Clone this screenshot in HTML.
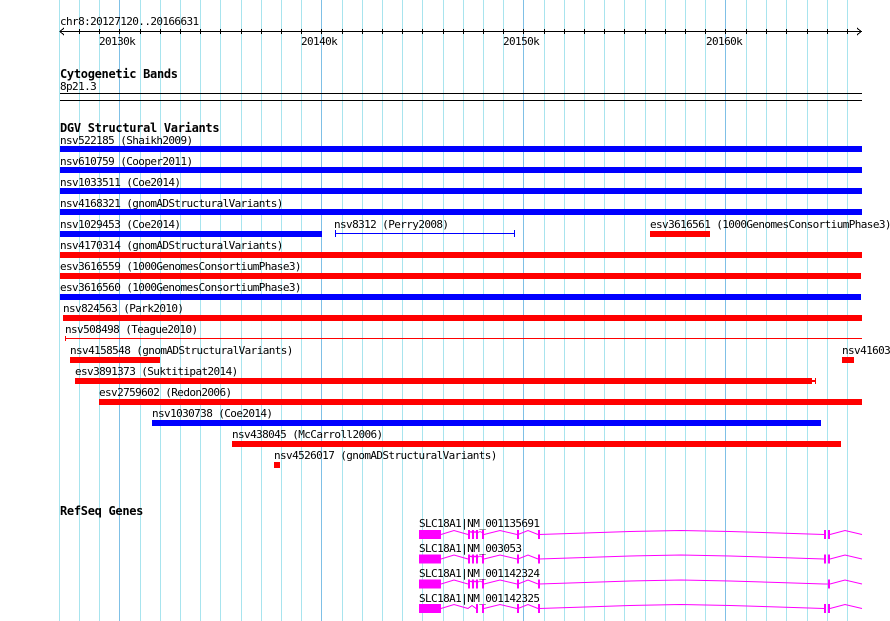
<!DOCTYPE html>
<html><head><meta charset="utf-8"><style>
html,body{margin:0;padding:0;background:#fff;}
svg{display:block;}
text{font-family:"DejaVu Sans Mono","Liberation Mono",monospace;font-size:11px;letter-spacing:-0.6px;fill:#000;}
.b{font-weight:bold;font-size:12px;letter-spacing:-0.3px;}
</style></head><body>
<svg width="890" height="621" viewBox="0 0 890 621" xmlns="http://www.w3.org/2000/svg" shape-rendering="crispEdges">
<g id="grid" stroke="#a8e4ee" stroke-width="1">
<line x1="59.5" y1="0" x2="59.5" y2="621"/><line x1="79.5" y1="0" x2="79.5" y2="621"/><line x1="99.5" y1="0" x2="99.5" y2="621"/>
<line x1="140.5" y1="0" x2="140.5" y2="621"/><line x1="160.5" y1="0" x2="160.5" y2="621"/><line x1="180.5" y1="0" x2="180.5" y2="621"/><line x1="200.5" y1="0" x2="200.5" y2="621"/><line x1="220.5" y1="0" x2="220.5" y2="621"/><line x1="241.5" y1="0" x2="241.5" y2="621"/><line x1="261.5" y1="0" x2="261.5" y2="621"/><line x1="281.5" y1="0" x2="281.5" y2="621"/><line x1="301.5" y1="0" x2="301.5" y2="621"/>
<line x1="342.5" y1="0" x2="342.5" y2="621"/><line x1="362.5" y1="0" x2="362.5" y2="621"/><line x1="382.5" y1="0" x2="382.5" y2="621"/><line x1="402.5" y1="0" x2="402.5" y2="621"/><line x1="422.5" y1="0" x2="422.5" y2="621"/><line x1="443.5" y1="0" x2="443.5" y2="621"/><line x1="463.5" y1="0" x2="463.5" y2="621"/><line x1="483.5" y1="0" x2="483.5" y2="621"/><line x1="503.5" y1="0" x2="503.5" y2="621"/>
<line x1="544.5" y1="0" x2="544.5" y2="621"/><line x1="564.5" y1="0" x2="564.5" y2="621"/><line x1="584.5" y1="0" x2="584.5" y2="621"/><line x1="604.5" y1="0" x2="604.5" y2="621"/><line x1="624.5" y1="0" x2="624.5" y2="621"/><line x1="645.5" y1="0" x2="645.5" y2="621"/><line x1="665.5" y1="0" x2="665.5" y2="621"/><line x1="685.5" y1="0" x2="685.5" y2="621"/><line x1="705.5" y1="0" x2="705.5" y2="621"/>
<line x1="746.5" y1="0" x2="746.5" y2="621"/><line x1="766.5" y1="0" x2="766.5" y2="621"/><line x1="786.5" y1="0" x2="786.5" y2="621"/><line x1="807.5" y1="0" x2="807.5" y2="621"/><line x1="827.5" y1="0" x2="827.5" y2="621"/><line x1="847.5" y1="0" x2="847.5" y2="621"/>
</g>
<g stroke="#7fc0e6" stroke-width="1">
<line x1="119.5" y1="0" x2="119.5" y2="621"/><line x1="321.5" y1="0" x2="321.5" y2="621"/><line x1="523.5" y1="0" x2="523.5" y2="621"/><line x1="725.5" y1="0" x2="725.5" y2="621"/>
</g>
<text x="60" y="25">chr8:20127120..20166631</text>
<g stroke="#000" stroke-width="1" fill="none">
<line x1="60" y1="31.5" x2="862" y2="31.5"/>
<polyline points="64,28 60,31.5 64,35"/>
<polyline points="857,28 861,31.5 857,35"/>
<path d="M79.5 29v5M99.5 29v5M119.5 29v5M140.5 29v5M160.5 29v5M180.5 29v5M200.5 29v5M220.5 29v5M241.5 29v5M261.5 29v5M281.5 29v5M301.5 29v5M321.5 29v5M342.5 29v5M362.5 29v5M382.5 29v5M402.5 29v5M422.5 29v5M443.5 29v5M463.5 29v5M483.5 29v5M503.5 29v5M523.5 29v5M544.5 29v5M564.5 29v5M584.5 29v5M604.5 29v5M624.5 29v5M645.5 29v5M665.5 29v5M685.5 29v5M705.5 29v5M725.5 29v5M746.5 29v5M766.5 29v5M786.5 29v5M807.5 29v5M827.5 29v5M847.5 29v5"/>
</g>
<text x="99" y="45">20130k</text><text x="301" y="45">20140k</text><text x="503" y="45">20150k</text><text x="706" y="45">20160k</text>
<text class="b" x="60" y="78">Cytogenetic Bands</text>
<text x="60" y="90">8p21.3</text>
<rect x="60" y="93" width="802" height="1" fill="#000"/>
<rect x="60" y="100" width="802" height="1" fill="#000"/>
<text class="b" x="60" y="132">DGV Structural Variants</text>
<g>
<text x="60" y="144">nsv522185 (Shaikh2009)</text><rect x="60" y="146" width="802" height="6" fill="#0000ff"/>
<text x="60" y="165">nsv610759 (Cooper2011)</text><rect x="60" y="167" width="802" height="6" fill="#0000ff"/>
<text x="60" y="186">nsv1033511 (Coe2014)</text><rect x="60" y="188" width="802" height="6" fill="#0000ff"/>
<text x="60" y="207">nsv4168321 (gnomADStructuralVariants)</text><rect x="60" y="209" width="802" height="6" fill="#0000ff"/>
<text x="60" y="228">nsv1029453 (Coe2014)</text><rect x="60" y="231" width="262" height="6" fill="#0000ff"/>
<text x="334" y="228">nsv8312 (Perry2008)</text>
<rect x="335" y="233" width="180" height="1" fill="#0000ff"/><rect x="335" y="230" width="1" height="7" fill="#0000ff"/><rect x="514" y="230" width="1" height="7" fill="#0000ff"/>
<text x="650" y="228">esv3616561 (1000GenomesConsortiumPhase3)</text><rect x="650" y="231" width="60" height="6" fill="#ff0000"/>
<text x="60" y="249">nsv4170314 (gnomADStructuralVariants)</text><rect x="60" y="252" width="802" height="6" fill="#ff0000"/>
<text x="60" y="270">esv3616559 (1000GenomesConsortiumPhase3)</text><rect x="60" y="273" width="801" height="6" fill="#ff0000"/>
<text x="60" y="291">esv3616560 (1000GenomesConsortiumPhase3)</text><rect x="60" y="294" width="801" height="6" fill="#0000ff"/>
<text x="63" y="312">nsv824563 (Park2010)</text><rect x="63" y="315" width="799" height="6" fill="#ff0000"/>
<text x="65" y="333">nsv508498 (Teague2010)</text><rect x="65" y="338" width="797" height="1" fill="#ff0000"/><rect x="65" y="336" width="1" height="5" fill="#ff0000"/>
<text x="70" y="354">nsv4158548 (gnomADStructuralVariants)</text><rect x="70" y="357" width="90" height="6" fill="#ff0000"/>
<text x="842" y="354">nsv41603</text><rect x="842" y="357" width="12" height="6" fill="#ff0000"/>
<text x="75" y="375">esv3891373 (Suktitipat2014)</text><rect x="75" y="378" width="737" height="6" fill="#ff0000"/><rect x="812" y="380" width="3" height="2" fill="#ff0000"/><rect x="815" y="378" width="1" height="6" fill="#ff0000"/>
<text x="99" y="396">esv2759602 (Redon2006)</text><rect x="99" y="399" width="763" height="6" fill="#ff0000"/>
<text x="152" y="417">nsv1030738 (Coe2014)</text><rect x="152" y="420" width="669" height="6" fill="#0000ff"/>
<text x="232" y="438">nsv438045 (McCarroll2006)</text><rect x="232" y="441" width="609" height="6" fill="#ff0000"/>
<text x="274" y="459">nsv4526017 (gnomADStructuralVariants)</text><rect x="274" y="462" width="6" height="6" fill="#ff0000"/>
</g>
<text class="b" x="60" y="515">RefSeq Genes</text>
<defs>
<g id="gene">
<rect x="419" y="-4.5" width="22" height="9" fill="#ff00ff"/>
<g fill="none" stroke="#ff00ff" stroke-width="1" shape-rendering="auto">
<polyline points="441,0 454,-4 468,0"/>
<polyline points="484,0 500,-4 517,0"/>
<polyline points="518,0 528,-4 538,0"/>
<polyline points="539,0 585,-1.5 630,-3 681,-4 730,-3 778,-1.5 824,0"/>
<polyline points="830,0 845,-4 862,0"/>
</g>
<rect x="517" y="-4.5" width="2" height="9" fill="#ff00ff"/>
<rect x="538" y="-4.5" width="2" height="9" fill="#ff00ff"/>
</g>
<g id="ex1">
<rect x="468" y="-4.5" width="2" height="9" fill="#ff00ff"/><rect x="472" y="-4.5" width="2" height="9" fill="#ff00ff"/>
<rect x="476" y="-4.5" width="2" height="9" fill="#ff00ff"/><rect x="482" y="-4.5" width="2" height="9" fill="#ff00ff"/>
<polyline points="470,-2 471,-3 472,-2 474,-2 475,-3 476,-2 478,-2 480,-3 482,-2" fill="none" stroke="#ff00ff"/>
</g>
</defs>
<text x="419" y="527">SLC18A1|NM_001135691</text>
<g transform="translate(0,534.5)"><use href="#gene"/><use href="#ex1"/><rect x="824" y="-4.5" width="2" height="9" fill="#ff00ff"/><rect x="828" y="-4.5" width="2" height="9" fill="#ff00ff"/></g>
<text x="419" y="552">SLC18A1|NM_003053</text>
<g transform="translate(0,559)"><use href="#gene"/><use href="#ex1"/><rect x="824" y="-4.5" width="2" height="9" fill="#ff00ff"/><rect x="828" y="-4.5" width="2" height="9" fill="#ff00ff"/></g>
<text x="419" y="577">SLC18A1|NM_001142324</text>
<g transform="translate(0,584)"><use href="#gene"/><use href="#ex1"/><rect x="828" y="-4.5" width="2" height="9" fill="#ff00ff"/><rect x="824" y="-0.5" width="4" height="1" fill="#ff00ff"/></g>
<text x="419" y="602">SLC18A1|NM_001142325</text>
<g transform="translate(0,608.5)"><use href="#gene"/>
<rect x="476" y="-4.5" width="2" height="9" fill="#ff00ff"/><rect x="482" y="-4.5" width="2" height="9" fill="#ff00ff"/>
<polyline points="468,0 472,-3 476,0" fill="none" stroke="#ff00ff"/>
<rect x="824" y="-4.5" width="2" height="9" fill="#ff00ff"/><rect x="828" y="-4.5" width="2" height="9" fill="#ff00ff"/></g>
</svg>
</body></html>
